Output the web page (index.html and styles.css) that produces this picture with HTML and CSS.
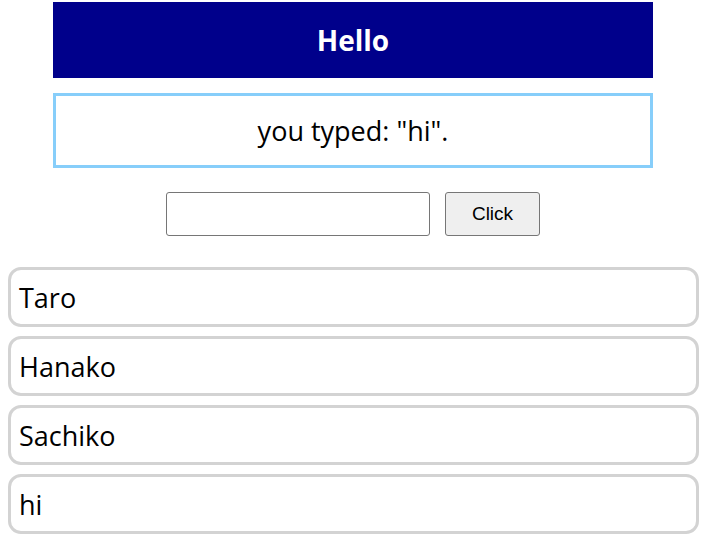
FILE: index.html
```html
<!DOCTYPE html>
<html>
<head>
<meta charset="utf-8">
<link rel="stylesheet" href="styles.css">
</head>
<body>
<div class="wrap">
  <header class="title">Hello</header>
  <div class="echo">you typed: "hi".</div>
  <div class="form">
    <input class="field" type="text">
    <button class="btn">Click</button>
  </div>
</div>
<ul class="list">
  <li class="item">Taro</li>
  <li class="item">Hanako</li>
  <li class="item">Sachiko</li>
  <li class="item">hi</li>
</ul>
</body>
</html>
```
FILE: styles.css
```css
body {
  margin: 2px 8px 8px;
  font-family: "Open Sans", "Noto Sans", sans-serif;
  background: #fff;
}
.wrap {
  width: 600px;
  margin-left: calc((100% - 601px) / 2);
}
.title {
  background: #00008b;
  color: #fff;
  height: 76px;
  display: flex;
  align-items: center;
  justify-content: center;
  font-weight: bold;
  font-size: 28px;
}
.echo {
  margin-top: 15px;
  height: 69px;
  border: 3px solid #87cefa;
  display: flex;
  align-items: center;
  justify-content: center;
  font-size: 27px;
  color: #000;
}
.form {
  margin-top: 24px;
  display: flex;
  justify-content: center;
  gap: 15px;
}
.field {
  box-sizing: border-box;
  width: 264px;
  height: 44px;
  border: 1px solid #767676;
  border-radius: 3px;
  margin: 0;
}
.btn {
  box-sizing: border-box;
  width: 95px;
  height: 44px;
  margin: 0;
  border: 1px solid #767676;
  border-radius: 3px;
  background: #efefef;
  font-family: "Liberation Sans", Arial, sans-serif;
  font-size: 19px;
  color: #000;
}
.list {
  list-style: none;
  margin: 31px 0 0;
  padding: 0;
  display: flex;
  flex-direction: column;
  gap: 9px;
}
.item {
  box-sizing: border-box;
  height: 60px;
  border: 3px solid #d3d3d3;
  border-radius: 13px;
  padding-left: 8px;
  display: flex;
  align-items: center;
  font-size: 27px;
  color: #000;
}
```
